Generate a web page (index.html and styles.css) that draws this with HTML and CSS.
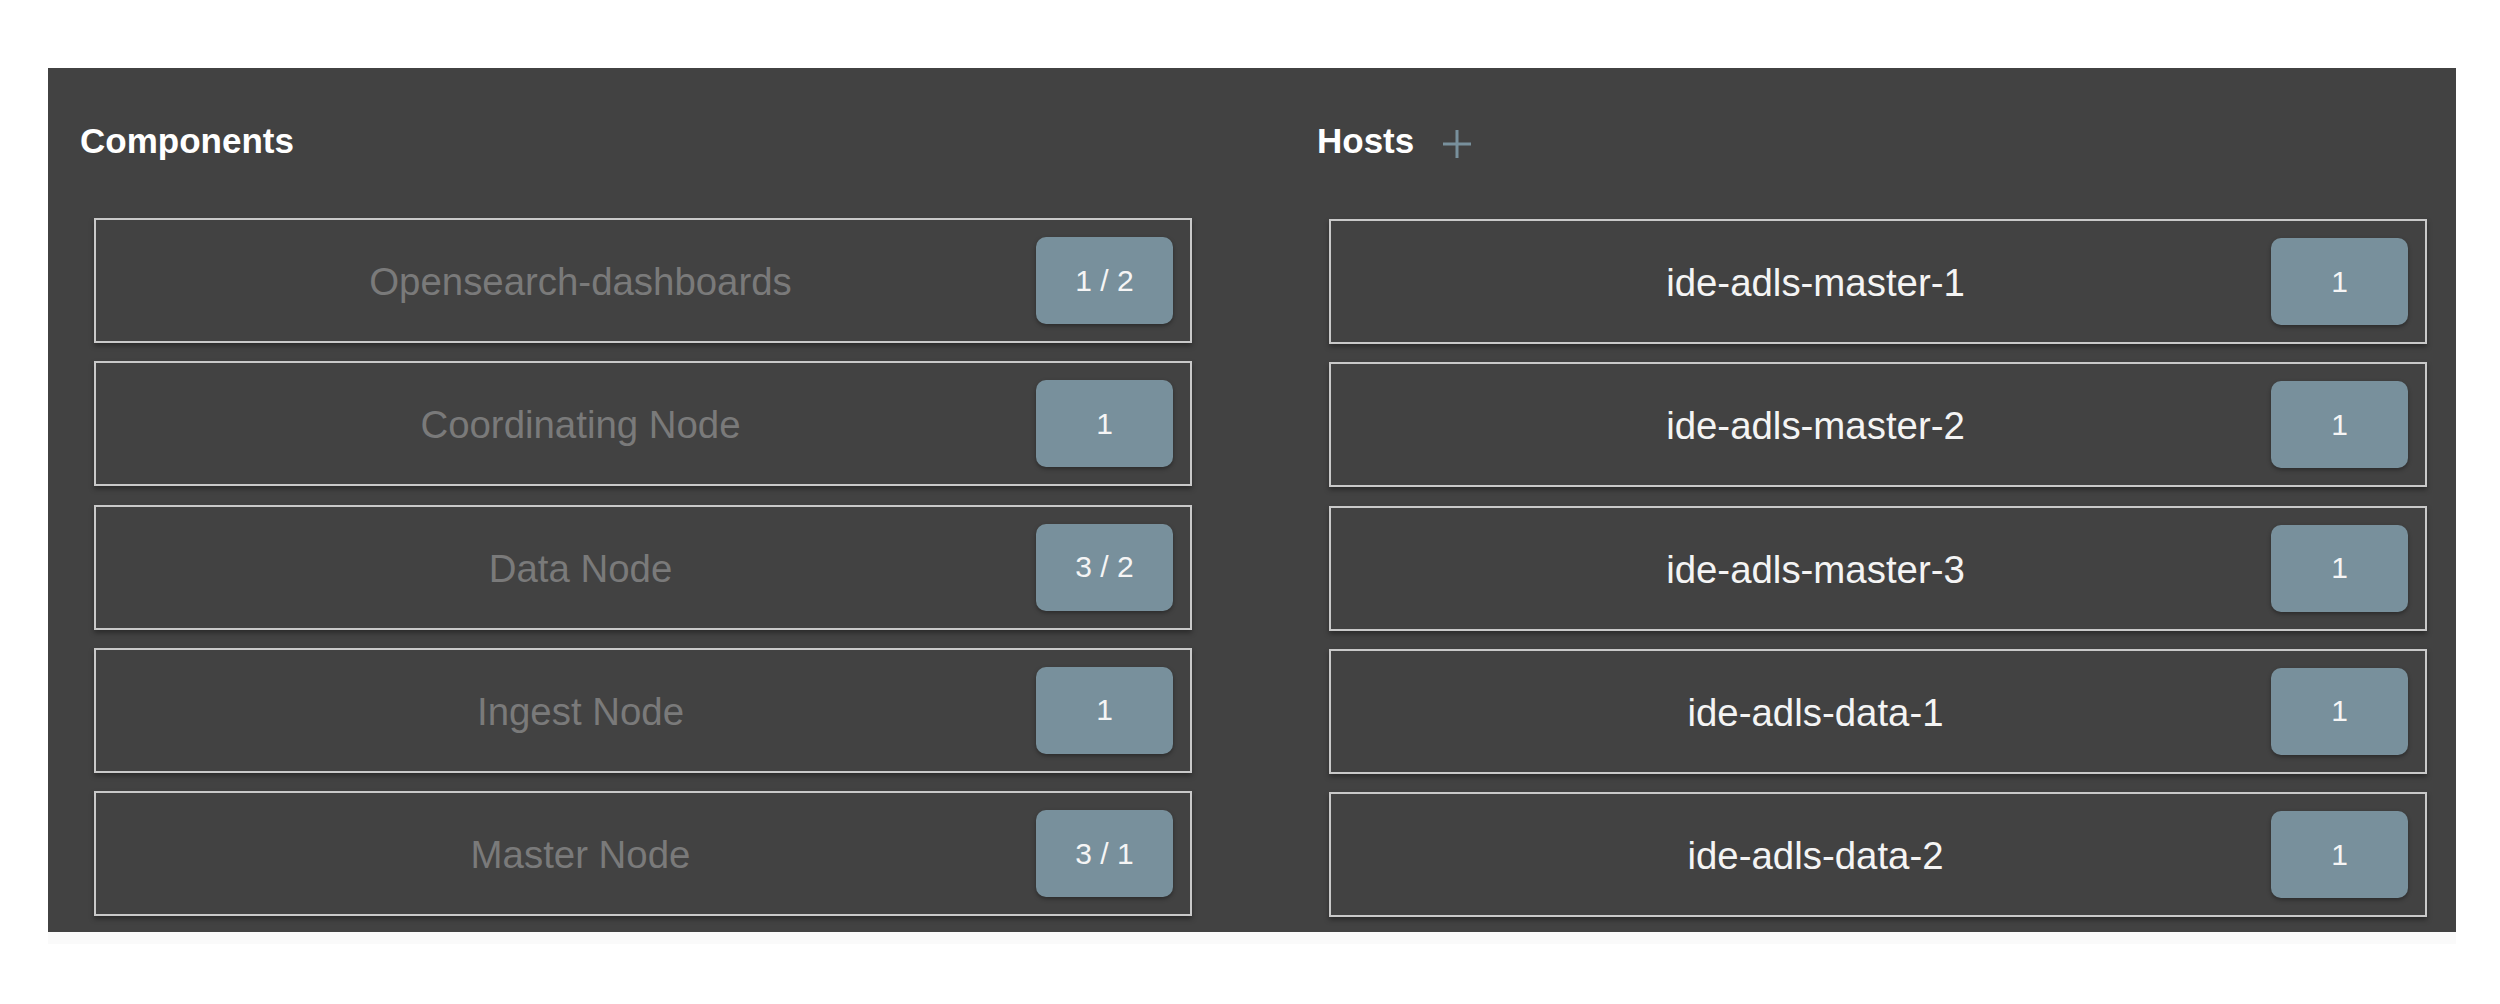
FILE: index.html
```html
<!DOCTYPE html>
<html lang="en">
<head>
<meta charset="utf-8">
<title>Components and Hosts</title>
<link rel="stylesheet" href="styles.css">
</head>
<body>
<main class="panel">
  <section class="col col--components">
    <h2 class="col-title">Components</h2>
    <ul class="card-list">
      <li class="card"><span class="card-label card-label--muted">Opensearch-dashboards</span><span class="badge">1 / 2</span></li>
      <li class="card"><span class="card-label card-label--muted">Coordinating Node</span><span class="badge">1</span></li>
      <li class="card"><span class="card-label card-label--muted">Data Node</span><span class="badge">3 / 2</span></li>
      <li class="card"><span class="card-label card-label--muted">Ingest Node</span><span class="badge">1</span></li>
      <li class="card"><span class="card-label card-label--muted">Master Node</span><span class="badge">3 / 1</span></li>
    </ul>
  </section>
  <section class="col col--hosts">
    <h2 class="col-title">Hosts
      <svg class="add-icon" viewBox="0 0 30 30" width="30" height="30" aria-hidden="true">
        <path d="M15 1V29M1 15H29" stroke="#78909c" stroke-width="3" fill="none"/>
      </svg>
    </h2>
    <ul class="card-list">
      <li class="card"><span class="card-label">ide-adls-master-1</span><span class="badge">1</span></li>
      <li class="card"><span class="card-label">ide-adls-master-2</span><span class="badge">1</span></li>
      <li class="card"><span class="card-label">ide-adls-master-3</span><span class="badge">1</span></li>
      <li class="card"><span class="card-label">ide-adls-data-1</span><span class="badge">1</span></li>
      <li class="card"><span class="card-label">ide-adls-data-2</span><span class="badge">1</span></li>
    </ul>
  </section>
</main>
<div class="bottom-strip"></div>
</body>
</html>
```
FILE: styles.css
```css
html, body {
  margin: 0;
  padding: 0;
  background: #ffffff;
  font-family: "Liberation Sans", Arial, sans-serif;
}

.panel {
  box-sizing: border-box;
  margin: 68px 0 0 48px;
  width: 2408px;
  height: 864px;
  background: #424242;
  padding: 53px 0 0 32px;
  display: grid;
  grid-template-columns: 1112px 1110px;
  column-gap: 125px;
  align-items: start;
}

.bottom-strip {
  margin-left: 48px;
  width: 2408px;
  height: 12px;
  background: #fafafa;
}

.col-title {
  margin: 0;
  height: 40px;
  line-height: 40px;
  font-size: 35px;
  font-weight: bold;
  color: #ffffff;
  display: flex;
  align-items: flex-start;
}

.add-icon {
  margin-left: 28px;
  margin-top: 8px;
  flex: none;
}

.card-list {
  list-style: none;
  margin: 57px 0 0 0;
  padding: 0;
  display: flex;
  flex-direction: column;
  gap: 18.25px;
}

.col--components .card-list {
  padding-left: 14px;
}

.col--hosts .card-list {
  padding-left: 12px;
  padding-top: 1px;
}

.card {
  box-sizing: border-box;
  width: 1098px;
  height: 125px;
  border: 2px solid #c9c9c9;
  box-shadow: 0 3px 5px rgba(0, 0, 0, 0.35);
  padding: 17px 17px 17px 29px;
  display: flex;
  align-items: center;
}

.card-label {
  flex: 1;
  padding-top: 3px;
  text-align: center;
  font-size: 38.4px;
  color: #f4f4f4;
  white-space: nowrap;
}

.card-label--muted {
  color: #7a7a7a;
}

.badge {
  flex: none;
  width: 137px;
  height: 87px;
  border-radius: 10px;
  background: #78909c;
  box-shadow: 0 2px 4px rgba(0, 0, 0, 0.35);
  color: #f5f5f5;
  font-size: 30px;
  display: flex;
  align-items: center;
  justify-content: center;
}
```
